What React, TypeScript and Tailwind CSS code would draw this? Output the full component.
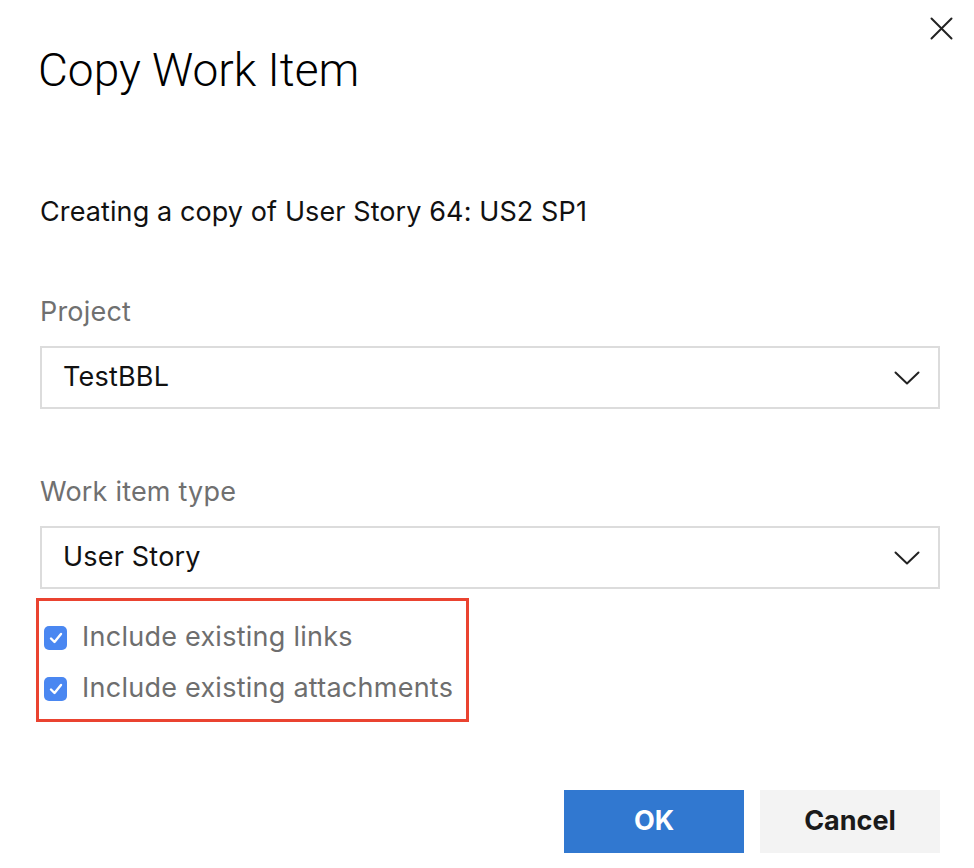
import React from 'react';

const Chevron = () => (
  <svg width="26" height="14" viewBox="0 0 26 14" fill="none" className="shrink-0">
    <path d="M1.5 1.5 L13 12.5 L24.5 1.5" stroke="#222" strokeWidth="2" strokeLinecap="round" strokeLinejoin="round" />
  </svg>
);

const Select = ({ value }: { value: string }) => (
  <div className="mt-[16px] h-[63px] border-2 border-[#dcdcdc] flex items-center justify-between pl-[21px] pr-[18px] text-[27px] tracking-[0.2px] text-[#111]">
    <span>{value}</span>
    <Chevron />
  </div>
);

const Check = ({ label }: { label: string }) => (
  <div className="h-[51px] flex items-center gap-[15px]">
    <div className="w-[23px] h-[24px] rounded-[5px] bg-[#4a87f1] flex items-center justify-center">
      <svg width="14" height="12" viewBox="0 0 14 12" fill="none">
        <path d="M2 6.5 L5.5 10 L12 2" stroke="white" strokeWidth="2.4" strokeLinecap="round" strokeLinejoin="round" />
      </svg>
    </div>
    <span className="text-[27px] tracking-[0.25px] text-[#6e6e6e]">{label}</span>
  </div>
);

export default function App() {
  return (
    <div className="relative min-h-screen bg-white font-['Inter','Liberation_Sans',sans-serif]">
      <button className="absolute top-[17px] right-[21px] w-[23px] h-[23px]">
        <svg width="23" height="23" viewBox="0 0 23 23" fill="none">
          <path d="M1.5 1.5 L21.5 21.5 M21.5 1.5 L1.5 21.5" stroke="#222" strokeWidth="2" strokeLinecap="round" />
        </svg>
      </button>

      <div className="pl-[40px] pr-[34px] pt-[40px]">
        <h1 className="font-['Roboto',sans-serif] font-light text-[46px] leading-[60px] text-black -ml-[2px]">
          Copy Work Item
        </h1>

        <p className="mt-[94px] text-[27px] leading-[36px] tracking-[0.1px] text-[#111]">
          Creating a copy of User Story 64: US2 SP1
        </p>

        <div className="mt-[64px] text-[27px] leading-[36px] tracking-[0.2px] text-[#707070]">Project</div>
        <Select value="TestBBL" />

        <div className="mt-[65px] text-[27px] leading-[36px] tracking-[0.2px] text-[#707070]">Work item type</div>
        <Select value="User Story" />

        <div className="mt-[9px] -ml-[4px] w-[433px] h-[124px] border-[3px] border-[#ea4330] pl-[5px] pt-[11px]">
          <Check label="Include existing links" />
          <Check label="Include existing attachments" />
        </div>

        <div className="mt-[68px] flex justify-end gap-[16px]">
          <button className="w-[180px] h-[63px] bg-[#3178d0] text-white text-[27px] font-bold">OK</button>
          <button className="w-[180px] h-[63px] bg-[#f3f3f3] text-[#1a1a1a] text-[27px] font-bold">Cancel</button>
        </div>
      </div>
    </div>
  );
}
